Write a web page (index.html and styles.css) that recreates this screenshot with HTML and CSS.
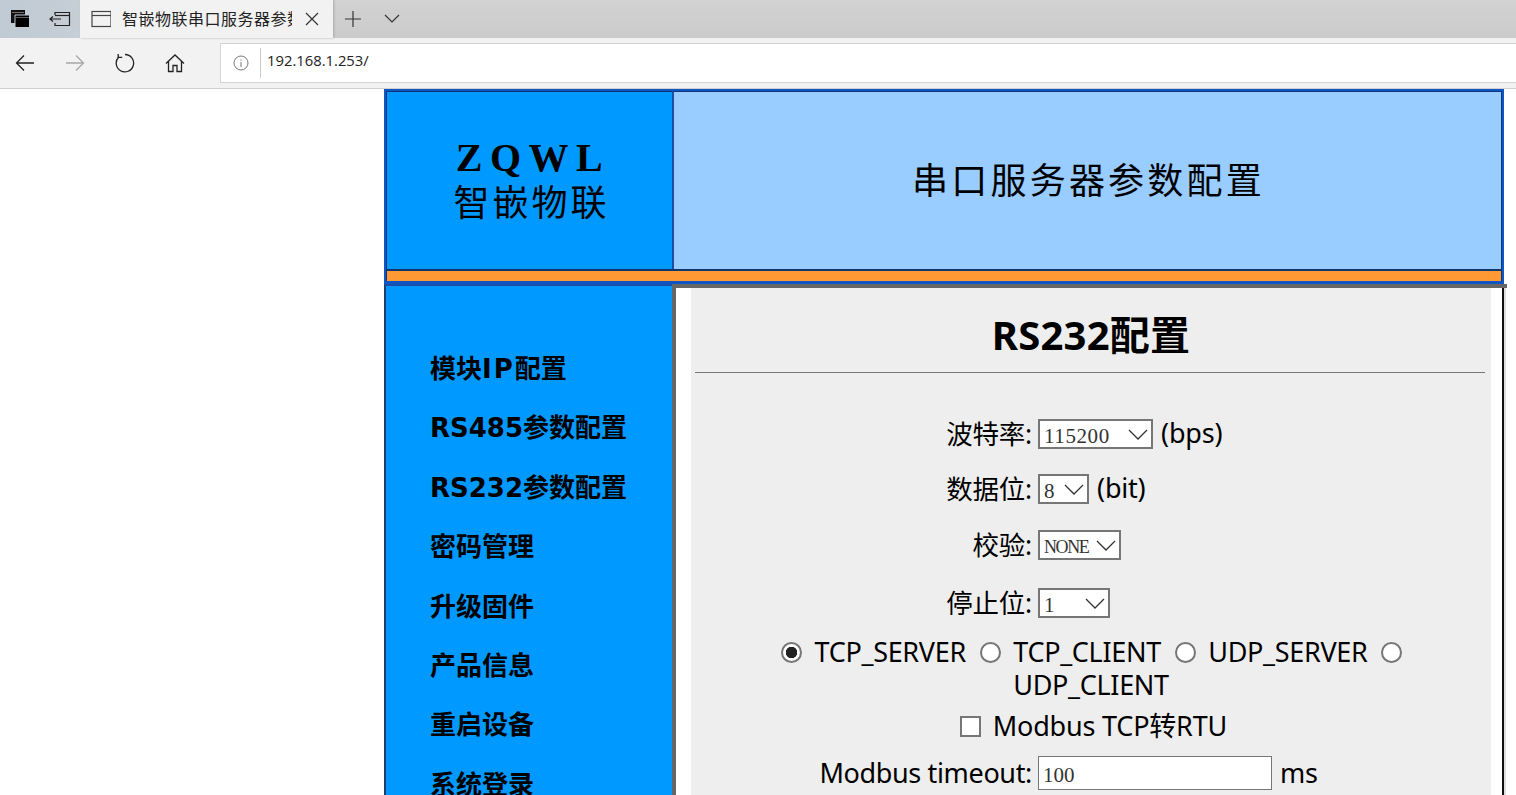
FILE: index.html
```html
<!DOCTYPE html>
<html lang="zh">
<head>
<meta charset="utf-8">
<title>智嵌物联串口服务器参数配置</title>
<link rel="stylesheet" href="styles.css">
</head>
<body>
<div class="chrome">
  <div class="tabbar">
    <div class="tab-tools">
      <svg class="ic" width="20" height="20" viewBox="0 0 20 20"><path d="M1 1h14v13H1z" fill="#111"/><path d="M2 3.500h12" stroke="#888" stroke-width=".8"/><path d="M5 6h14.500v12.500H5z" fill="#000" stroke="#c2ccd5" stroke-width="1"/><path d="M6 8.500h13" stroke="#777" stroke-width=".8"/></svg>
      <svg class="ic" width="22" height="18" viewBox="0 0 22 18" fill="none" stroke="#222" stroke-width="1.200"><path d="M6 5V2.500h14.500v13H6V13"/><path d="M6 5.500h14.500"/><path d="M1 9h11M4 6.500L1 9l3 2.500"/></svg>
    </div>
    <div class="tab">
      <svg width="20" height="18" viewBox="0 0 20 18" fill="none" stroke="#444" stroke-width="1.200"><rect x="1" y="1.500" width="19" height="15"/><path d="M1 5.500h19"/></svg>
      <span class="tab-title">智嵌物联串口服务器参数配置</span>
      <svg class="tab-x" width="14" height="14" viewBox="0 0 14 14" stroke="#333" stroke-width="1.200"><path d="M1 1l12 12M13 1L1 13"/></svg>
    </div>
    <svg class="tab-plus" width="18" height="18" viewBox="0 0 18 18" stroke="#333" stroke-width="1.200"><path d="M9 1v16M1 9h16"/></svg>
    <svg class="tab-down" width="16" height="10" viewBox="0 0 16 10" fill="none" stroke="#333" stroke-width="1.200"><path d="M1 1l7 7 7-7"/></svg>
  </div>
  <div class="toolbar">
    <div class="nav">
      <svg width="20" height="18" viewBox="0 0 20 18" fill="none" stroke="#222" stroke-width="1.300"><path d="M19 9H1.500M9 1.500L1.500 9 9 16.500"/></svg>
      <svg width="20" height="18" viewBox="0 0 20 18" fill="none" stroke="#a8a8a8" stroke-width="1.300"><path d="M1 9h17.500M11 1.500L18.500 9 11 16.500"/></svg>
      <svg width="20" height="20" viewBox="0 0 20 20" fill="none" stroke="#222" stroke-width="1.300"><path d="M10 1.500A8.700 8.700 0 1 1 3.800 4"/><path d="M3.200 1v3.400h4"/></svg>
      <svg width="20" height="20" viewBox="0 0 20 20" fill="none" stroke="#222" stroke-width="1.300"><path d="M1 10.500L10 2l9 8.500M3.500 8.500V18.500h4.500v-6h4v6h4.500V8.500"/></svg>
    </div>
    <div class="addr">
      <svg class="info" width="16" height="16" viewBox="0 0 16 16" fill="none" stroke="#777"><circle cx="8" cy="8" r="7"/><path d="M8 7v5M8 4.500v1.200"/></svg>
      <span class="url">192.168.1.253/</span>
    </div>
  </div>
</div>

<div class="page">
  <header class="hdr">
    <div class="hdr-cells">
      <div class="logo"><strong>ZQWL</strong><span>智嵌物联</span></div>
      <div class="title">串口服务器参数配置</div>
    </div>
    <div class="bar"></div>
  </header>
  <div class="body">
    <nav class="side">
      <a>模块<span class="ip">IP</span>配置</a>
      <a>RS485参数配置</a>
      <a>RS232参数配置</a>
      <a>密码管理</a>
      <a>升级固件</a>
      <a>产品信息</a>
      <a>重启设备</a>
      <a>系统登录</a>
    </nav>
    <div class="frame">
      <main class="main">
        <h1>RS232配置</h1>
        <hr>
        <div class="row r1"><label>波特率:</label><span class="sel w115"><select><option>115200</option></select><svg width="20" height="11" viewBox="0 0 20 11" fill="none" stroke="#333" stroke-width="1.300"><path d="M1 1l9 9 9-9"/></svg></span><span class="unit">(bps)</span></div>
        <div class="row r2"><label>数据位:</label><span class="sel w51"><select><option>8</option></select><svg width="20" height="11" viewBox="0 0 20 11" fill="none" stroke="#333" stroke-width="1.300"><path d="M1 1l9 9 9-9"/></svg></span><span class="unit">(bit)</span></div>
        <div class="row r3"><label>校验:</label><span class="sel w83"><select class="narrow"><option>NONE</option></select><svg width="20" height="11" viewBox="0 0 20 11" fill="none" stroke="#333" stroke-width="1.300"><path d="M1 1l9 9 9-9"/></svg></span></div>
        <div class="row r4"><label>停止位:</label><span class="sel w72"><select><option>1</option></select><svg width="20" height="11" viewBox="0 0 20 11" fill="none" stroke="#333" stroke-width="1.300"><path d="M1 1l9 9 9-9"/></svg></span></div>
        <div class="radios">
          <input type="radio" name="m" checked> TCP_SERVER
          <input type="radio" name="m"> TCP_CLIENT
          <input type="radio" name="m"> UDP_SERVER
          <input type="radio" name="m"> UDP_CLIENT
        </div>
        <div class="check"><input type="checkbox"> Modbus TCP转RTU</div>
        <div class="row r6"><label class="wide">Modbus timeout:</label><input class="txt" type="text" value="100"><span class="unit">ms</span></div>
      </main>
    </div>
  </div>
</div>
</body>
</html>
```
FILE: styles.css
```css
html, body { margin: 0; padding: 0; height: 795px; overflow: hidden; background: #fff; }
body { font-family: "Noto Sans", "Noto Sans CJK SC", sans-serif; color: #000; }

.chrome { height: 89px; box-sizing: border-box; border-bottom: 1px solid #d0d0d0; background: #f2f2f2; }
.tabbar { height: 38px; display: flex; align-items: center; background: linear-gradient(#d2d2d2, #cbcbcb); }
.tab-tools { width: 80px; height: 38px; flex: none; display: flex; align-items: center; gap: 19px; padding-left: 10px; box-sizing: border-box; background: linear-gradient(90deg, #bfcad4, #c6ced6); }
.tab { width: 253px; height: 38px; flex: none; box-sizing: border-box; display: flex; align-items: center; padding-left: 11px; background: #f2f2f2; box-shadow: 1px 0 2px #aaa; }
.tab-title { width: 170px; margin: -3px 0 0 11px; overflow: hidden; white-space: nowrap; font-size: 16px; letter-spacing: .5px; color: #222; }
.tab-x { margin-left: 13px; }
.tab-plus { margin-left: 11px; }
.tab-down { margin-left: 22px; }
.toolbar { height: 50px; display: flex; align-items: center; }
.nav { width: 220px; flex: none; box-sizing: border-box; display: flex; align-items: center; gap: 30px; padding-left: 15px; }
.addr { flex: 1; height: 40px; margin-top: -1px; box-sizing: border-box; display: flex; align-items: center; background: #fff; border: 1px solid #d4d4d4; border-right: 0; padding-left: 12px; }
.info { margin-right: 11px; }
.url { height: 30px; line-height: 24px; border-left: 1px solid #ccc; padding-left: 6px; font-size: 14.800px; color: #222; font-family: "Open Sans", sans-serif; }

.page { margin-left: 384px; width: 1123px; }
.hdr { width: 1120px; height: 195px; box-sizing: border-box; border: 2px solid #0d56c4; background: #0d56c4; }
.hdr-cells { display: flex; height: 180px; border-bottom: 2px solid #10366f; box-sizing: border-box; }
.logo { width: 286px; flex: none; background: #0099ff; display: flex; flex-direction: column; align-items: center; justify-content: center; border-left: 1px solid #10366f; border-top: 1px solid #10366f; padding-bottom: 3px; box-sizing: border-box; }
.logo strong { font: bold 40px/43px "Liberation Serif", serif; letter-spacing: 7.500px; margin-left: 7px; }
.logo span { font: 400 36px/43px "Noto Sans CJK SC", sans-serif; letter-spacing: 3px; margin-left: 4px; }
.title { flex: 1; background: #99ccff; border-left: 2px solid #1d4fa8; border-top: 1px solid #10366f; border-right: 1px solid #10366f; display: flex; align-items: center; justify-content: center; font: 400 36px/40px "Noto Sans CJK SC", sans-serif; letter-spacing: 3.200px; padding: 0 6px 6px 8px; box-sizing: border-box; }
.bar { height: 10px; background: #ff9933; border-left: 1px solid #10366f; border-right: 1px solid #10366f; }

.body { display: flex; height: 520px; }
.side { width: 288px; flex: none; box-sizing: border-box; background: #0099ff; border-left: 2px solid #1a3f73; border-top: 2px solid #1d4fa8; padding: 54px 0 0 44px; display: flex; flex-direction: column; }
.side a { height: 59.400px; flex: none; font: bold 26px/59.400px "DejaVu Sans", "Noto Sans CJK SC", sans-serif; white-space: nowrap; }
.ip { letter-spacing: 2px; }
.frame { width: 835px; flex: none; box-sizing: border-box; background: #fff; border-top: 4px solid #666; border-left: 4px solid #666; padding-left: 15px; position: relative; }
.frame::after { content: ""; position: absolute; top: 0; bottom: 0; right: 3px; width: 2px; background: #111; box-shadow: 2px 0 0 #ddd; }
.main { width: 800px; height: 100%; background: #eee; text-align: center; font-size: 27px; letter-spacing: -.2px; }
h1 { margin: 0; padding-top: 20px; font: bold 40px/54px "Noto Sans", "Noto Sans CJK SC", sans-serif; letter-spacing: .2px; }
hr { margin: 10px 6px 0 4px; border: 0; border-top: 1px solid #777; height: 0; }

.row { display: flex; align-items: center; white-space: nowrap; height: 40px; }
.row label { width: 341px; flex: none; margin-right: 1px; margin-top: -3px; text-align: right; font-size: 26.500px; }
.row label.wide { font-size: 27px; letter-spacing: -.35px; margin-top: 1px; }
.unit { margin-top: -3px; }
.r6 .unit { margin-top: 1px; }
.r1 { margin-top: 41px; }
.r2 { margin-top: 15px; }
.r3 { margin-top: 16px; }
.r4 { margin-top: 18px; }
.r6 { margin-top: 6px; }

.sel { display: block; flex: none; position: relative; height: 30px; margin: 0 8px 0 5px; }
.sel select { appearance: none; display: block; width: 100%; height: 100%; box-sizing: border-box; margin: 0; border: 2px solid #767676; border-radius: 0; background: #fff; font: 21px "Liberation Serif", serif; color: #333; padding: 3px 0 0 4px; letter-spacing: .6px; }
.sel select.narrow { font-size: 18px; letter-spacing: -1.400px; }
.sel svg { position: absolute; right: 5px; top: 10px; pointer-events: none; }
.w115 { width: 115px; }
.w51 { width: 51px; }
.w83 { width: 83px; }
.w72 { width: 72px; }

.radios { width: 770px; margin: 12px auto 0; line-height: 33px; letter-spacing: -.32px; }
input[type=radio] { appearance: none; width: 21px; height: 21px; margin: 0 6px 0 7px; border: 2px solid #767676; border-radius: 50%; background: #fff; vertical-align: -1px; box-sizing: border-box; }
input[type=radio]:checked { background: radial-gradient(circle, #222 0 5.500px, #fff 6px); }
.check { margin-top: 5px; line-height: 40px; padding-left: 5px; }
input[type=checkbox] { appearance: none; width: 21px; height: 21px; margin: 0 5px 0 0; border: 2px solid #767676; background: #fff; vertical-align: -1px; box-sizing: border-box; }
.txt { width: 234px; height: 34px; flex: none; box-sizing: border-box; margin: 2px 8px 0 5px; border: 1px solid #767676; border-radius: 0; padding: 4px 4px 0; font: 21px "Liberation Serif", serif; color: #333; background: #fff; }
```
